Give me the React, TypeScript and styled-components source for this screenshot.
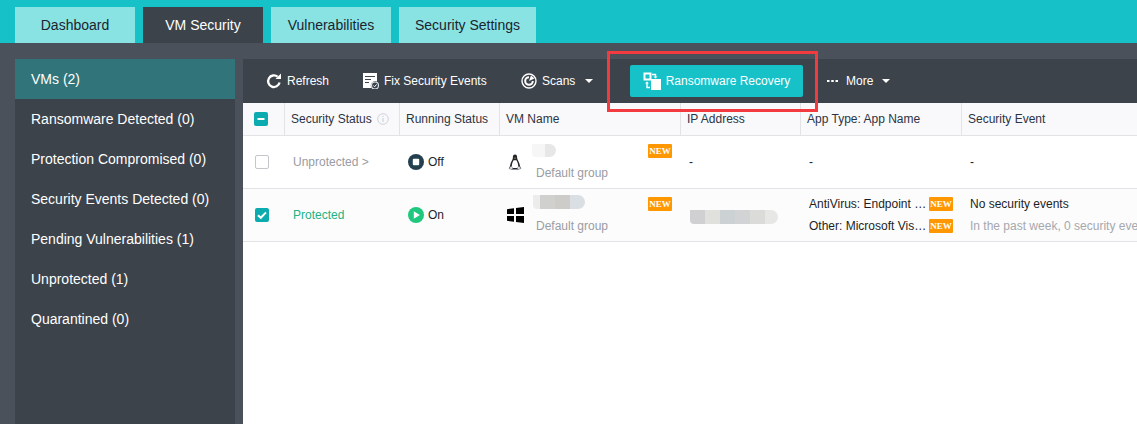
import React from "react";
import styled, { createGlobalStyle } from "styled-components";

const Global = createGlobalStyle`
  html, body { margin: 0; padding: 0; background: #4a515a; overflow: hidden; }
  body { font-family: "Liberation Sans", Arial, sans-serif; }
`;

const Page = styled.div`
  position: relative;
  width: 1137px;
  height: 424px;
  overflow: hidden;
  display: flex;
  flex-direction: column;
`;

const TabBar = styled.div`
  height: 36px;
  padding: 7px 0 0 15px;
  background: #17c1c8;
  display: flex;
  gap: 8px;
  flex: none;
`;

const Tab = styled.div<{ $active?: boolean; $w: number }>`
  width: ${(p) => p.$w}px;
  height: 36px;
  display: flex;
  align-items: center;
  justify-content: center;
  font-size: 14px;
  background: ${(p) => (p.$active ? "#3d434b" : "#8ae3e3")};
  color: ${(p) => (p.$active ? "#fff" : "#1a2530")};
`;

const Body = styled.div`
  flex: 1;
  min-height: 0;
  display: flex;
  gap: 8px;
  padding: 16px 0 0 15px;
`;

const Sidebar = styled.div`
  width: 220px;
  background: #3d434b;
  flex: none;
`;

const SideItem = styled.div<{ $active?: boolean }>`
  height: 40px;
  padding-left: 16px;
  display: flex;
  align-items: center;
  font-size: 14px;
  color: #fff;
  background: ${(p) => (p.$active ? "#31757b" : "transparent")};
`;

const Main = styled.div`
  flex: 1;
  min-width: 0;
  background: #fff;
  display: flex;
  flex-direction: column;
`;

const Toolbar = styled.div`
  height: 44px;
  flex: none;
  background: #3d434b;
  display: flex;
  align-items: center;
  color: #fff;
  font-size: 12px;
`;

const ToolItem = styled.div<{ $w: number }>`
  width: ${(p) => p.$w}px;
  flex: none;
  display: flex;
  align-items: center;
  gap: 5px;
  padding-left: 23px;
  box-sizing: border-box;
  white-space: nowrap;
`;

const MoreItem = styled(ToolItem)`
  padding-left: 24px;
  gap: 8px;
`;

const Caret = styled.span`
  width: 0;
  height: 0;
  margin-left: 5px;
  border-left: 4px solid transparent;
  border-right: 4px solid transparent;
  border-top: 4px solid #fff;
`;

const MoreCaret = styled(Caret)`
  margin-left: 1px;
`;

const RecoveryButton = styled.div`
  width: 173px;
  height: 32px;
  margin-left: 2px;
  background: #17c1c8;
  border-radius: 2px;
  display: flex;
  align-items: center;
  justify-content: center;
  gap: 5px;
  color: #fff;
  font-size: 12px;
  flex: none;
`;

const Row = styled.div<{ $kind: "head" | "off" | "on" }>`
  display: grid;
  grid-template-columns: 42px 115px 100px 181px 120px 161px 1fr;
  height: ${(p) => (p.$kind === "head" ? "33px" : "53px")};
  box-sizing: border-box;
  border-bottom: 1px solid #e1e3e6;
  background: ${(p) => (p.$kind === "head" ? "#f9f9fb" : p.$kind === "on" ? "#fcfcfc" : "#fff")};
  flex: none;
  overflow: hidden;
`;

const HeadCell = styled.div`
  display: flex;
  align-items: center;
  gap: 5px;
  padding-left: 6px;
  border-right: 1px solid #e1e3e6;
  font-size: 12px;
  color: #2c3344;
  white-space: nowrap;
  &:last-child { border-right: 0; }
`;

const CheckCell = styled.div`
  display: flex;
  align-items: center;
  justify-content: center;
  padding-right: 4px;
`;

const HeadCheckCell = styled(CheckCell)`
  border-right: 1px solid #e1e3e6;
  padding-right: 5px;
`;

const Box = styled.span<{ $on?: boolean }>`
  width: 14px;
  height: 14px;
  box-sizing: border-box;
  border-radius: 2px;
  border: ${(p) => (p.$on ? "0" : "1px solid #c4c6ca")};
  background: ${(p) => (p.$on ? "#0cabaf" : "#fff")};
  display: flex;
  align-items: center;
  justify-content: center;
`;

const Cell = styled.div<{ $tone?: "muted" | "green" }>`
  display: flex;
  align-items: center;
  padding-left: 8px;
  font-size: 12px;
  white-space: nowrap;
  overflow: hidden;
  color: ${(p) => (p.$tone === "muted" ? "#999ca3" : p.$tone === "green" ? "#24b283" : "#1c1f26")};
`;

const StatusCell = styled(Cell)`
  gap: 4px;
`;

const NameCell = styled.div`
  position: relative;
  display: flex;
  align-items: center;
  padding-left: 6px;
`;

const OsSlot = styled.span`
  width: 18px;
  flex: none;
  display: flex;
  justify-content: center;
`;

const NameStack = styled.div`
  display: flex;
  flex-direction: column;
  margin-left: 12px;
  height: 100%;
  justify-content: flex-end;
  padding-bottom: 8px;
  box-sizing: border-box;
`;

const GroupLabel = styled.span`
  font-size: 12px;
  color: #999ca3;
`;

const NewBadge = styled.span`
  width: 24px;
  height: 14px;
  flex: none;
  border-radius: 1px;
  background: #ff9800;
  color: #fff;
  font-family: "Liberation Serif", serif;
  font-weight: bold;
  font-size: 9px;
  line-height: 14px;
  text-align: center;
`;

const NameBadge = styled(NewBadge)`
  position: absolute;
  top: 8px;
  left: 148px;
`;

const Mosaic = styled.div<{ $left: number; $top: number }>`
  position: absolute;
  left: ${(p) => p.$left}px;
  top: ${(p) => p.$top}px;
  display: flex;
  overflow: hidden;
  border-radius: 0 7px 7px 4px;
`;

const Tile = styled.span<{ $c: string; $w: number; $h: number }>`
  width: ${(p) => p.$w}px;
  height: ${(p) => p.$h}px;
  background: ${(p) => p.$c};
`;

const IpCell = styled(Cell)`
  position: relative;
  overflow: visible;
`;

const AppCell = styled.div`
  display: flex;
  flex-direction: column;
  justify-content: center;
  gap: 8px;
  padding-left: 8px;
  font-size: 12px;
  color: #1c1f26;
`;

const AppLine = styled.div`
  display: flex;
  align-items: center;
  gap: 4px;
  height: 14px;
  white-space: nowrap;
`;

const AppText = styled.span`
  width: 116px;
`;

const EventCell = styled.div`
  display: flex;
  flex-direction: column;
  justify-content: center;
  gap: 8px;
  padding-left: 8px;
  font-size: 12px;
  color: #1c1f26;
  white-space: nowrap;
  overflow: hidden;
`;

const EventNote = styled.span`
  color: #a5a8ae;
`;

const Highlight = styled.div`
  position: absolute;
  left: 607px;
  top: 51px;
  width: 211px;
  height: 61px;
  box-sizing: border-box;
  border: 3px solid #f23a3f;
  pointer-events: none;
`;

const RefreshIcon = () => (
  <svg width="16" height="16" viewBox="0 0 16 16" fill="none">
    <path d="M13.600 9.500A5.800 5.800 0 1 1 11.600 3.700" stroke="#fff" strokeWidth="2.300" />
    <path d="M9.500 6h5.500V.5z" fill="#fff" />
  </svg>
);

const FixIcon = () => (
  <svg width="16" height="16" viewBox="0 0 16 16">
    <path d="M0 0h14v8.500a4.500 4.500 0 0 0-5.500 6.500H0z" fill="#fff" />
    <path d="M2 3.500h10M2 6.500h6M2 9.500h4" stroke="#3d434b" strokeWidth="1.200" />
    <circle cx="12" cy="12.500" r="3.500" fill="none" stroke="#dfe8ee" strokeWidth="1.100" />
    <path d="M10.300 12.500l1.300 1.300 2-2.400" fill="none" stroke="#fff" strokeWidth="1" />
  </svg>
);

const ScanIcon = () => (
  <svg width="16" height="16" viewBox="0 0 16 16" fill="none">
    <circle cx="8" cy="8" r="7" stroke="#fff" strokeWidth="1.400" />
    <path d="M8 4.200A3.800 3.800 0 1 0 11.800 8" stroke="#fff" strokeWidth="2" />
    <path d="M8 8l2-5.500 3.500 3z" fill="#fff" />
  </svg>
);

const RecoveryIcon = () => (
  <svg width="18" height="18" viewBox="0 0 18 18" fill="none">
    <rect x="1.500" y="1.500" width="6" height="6" stroke="#fff" strokeWidth="2" />
    <rect x="8" y="7" width="10" height="11" fill="#fff" />
    <path d="M9 2.500h3.500v3" stroke="#fff" strokeWidth="1.400" />
    <path d="M10.500 4.500l2 2 2-2z" fill="#fff" />
    <path d="M7 15.500H4v-5" stroke="#fff" strokeWidth="1.400" />
    <path d="M2 11.500l2-2 2 2z" fill="#fff" />
  </svg>
);

const MoreDots = () => (
  <svg width="11" height="2" viewBox="0 0 11 2">
    <path d="M0 0h2.500v2H0zM4.250 0h2.500v2h-2.500zM8.500 0H11v2H8.500z" fill="#fff" />
  </svg>
);

const InfoIcon = () => (
  <svg width="12" height="12" viewBox="0 0 12 12" fill="none">
    <circle cx="6" cy="6" r="5.300" stroke="#ced3dc" />
    <path d="M6 5v4M6 2.800v1.300" stroke="#ced3dc" strokeWidth="1.200" />
  </svg>
);

const Minus = () => (
  <svg width="14" height="14" viewBox="0 0 14 14">
    <path d="M3.500 7h7" stroke="#fff" strokeWidth="2" />
  </svg>
);

const Check = () => (
  <svg width="14" height="14" viewBox="0 0 14 14" fill="none">
    <path d="M3 7.200l2.800 2.600L11 4.400" stroke="#fff" strokeWidth="2" />
  </svg>
);

const OffIcon = () => (
  <svg width="16" height="16" viewBox="0 0 16 16">
    <circle cx="8" cy="8" r="8" fill="#24404f" />
    <rect x="4.800" y="4.800" width="6.400" height="6.400" rx="1" fill="#fff" />
  </svg>
);

const OnIcon = () => (
  <svg width="16" height="16" viewBox="0 0 16 16">
    <circle cx="8" cy="8" r="8" fill="#20c77f" />
    <path d="M5.800 4.200l6 3.800-6 3.800z" fill="#fff" />
  </svg>
);

const LinuxIcon = () => (
  <svg width="14" height="16" viewBox="0 0 14 16">
    <path d="M7 .5C5.200.5 4.800 2 4.900 3.800 5 5.500 2.500 8.500 2.200 11 2 12.500 1.300 13.500 1 14.500l3 1h6l3-1c-.3-1-1-2-1.200-3.500C11.500 8.500 9 5.500 9.100 3.800 9.200 2 8.800.5 7 .5z" fill="#22252b" />
    <path d="M5.600 6.200C4.200 8.500 3.400 11 4 14h6c.6-3-.2-5.500-1.600-7.800z" fill="#fff" />
    <path d="M5.900 3.800h2.200L7 5z" fill="#dba23a" />
    <path d="M1 14.500l3 1 .8-1.500-1.600-2zM13 14.500l-3 1-.8-1.500 1.600-2z" fill="#e2e5e8" stroke="#6a7078" strokeWidth=".5" />
  </svg>
);

const WinIcon = () => (
  <svg width="17" height="16" viewBox="0 0 17 16">
    <path d="M0 2.200l7-1V7H0zM9 .9L17 0v7H9zM0 9h7v5.800l-7-1zM9 9h8v7l-8-1z" fill="#000" />
  </svg>
);

const tiles = (list: [string, number][], h: number) =>
  list.map(([c, w], i) => <Tile key={i} $c={c} $w={w} $h={h} />);

export default function App() {
  return (
    <Page>
      <Global />
      <TabBar>
        <Tab $w={120}>Dashboard</Tab>
        <Tab $w={120} $active>VM Security</Tab>
        <Tab $w={120}>Vulnerabilities</Tab>
        <Tab $w={137}>Security Settings</Tab>
      </TabBar>
      <Body>
        <Sidebar>
          <SideItem $active>VMs (2)</SideItem>
          <SideItem>Ransomware Detected (0)</SideItem>
          <SideItem>Protection Compromised (0)</SideItem>
          <SideItem>Security Events Detected (0)</SideItem>
          <SideItem>Pending Vulnerabilities (1)</SideItem>
          <SideItem>Unprotected (1)</SideItem>
          <SideItem>Quarantined (0)</SideItem>
        </Sidebar>
        <Main>
          <Toolbar>
            <ToolItem $w={97}><RefreshIcon />Refresh</ToolItem>
            <ToolItem $w={158}><FixIcon />Fix Security Events</ToolItem>
            <ToolItem $w={130}><ScanIcon />Scans<Caret /></ToolItem>
            <RecoveryButton><RecoveryIcon />Ransomware Recovery</RecoveryButton>
            <MoreItem $w={90}><MoreDots /><span>More</span><MoreCaret /></MoreItem>
          </Toolbar>
          <Row $kind="head">
            <HeadCheckCell><Box $on><Minus /></Box></HeadCheckCell>
            <HeadCell>Security Status <InfoIcon /></HeadCell>
            <HeadCell>Running Status</HeadCell>
            <HeadCell>VM Name</HeadCell>
            <HeadCell>IP Address</HeadCell>
            <HeadCell>App Type: App Name</HeadCell>
            <HeadCell>Security Event</HeadCell>
          </Row>
          <Row $kind="off">
            <CheckCell><Box /></CheckCell>
            <Cell $tone="muted">Unprotected &gt;</Cell>
            <StatusCell><OffIcon />Off</StatusCell>
            <NameCell>
              <OsSlot><LinuxIcon /></OsSlot>
              <NameStack><GroupLabel>Default group</GroupLabel></NameStack>
              <Mosaic $left={32} $top={8}>{tiles([["#f5f6f5", 13], ["#e6e7e6", 11]], 13)}</Mosaic>
              <NameBadge>NEW</NameBadge>
            </NameCell>
            <Cell>-</Cell>
            <Cell>-</Cell>
            <Cell>-</Cell>
          </Row>
          <Row $kind="on">
            <CheckCell><Box $on><Check /></Box></CheckCell>
            <Cell $tone="green">Protected</Cell>
            <StatusCell><OnIcon />On</StatusCell>
            <NameCell>
              <OsSlot><WinIcon /></OsSlot>
              <NameStack><GroupLabel>Default group</GroupLabel></NameStack>
              <Mosaic $left={33} $top={6}>{tiles([["#ececec", 7], ["#d0d0cf", 15], ["#cdccc9", 15], ["#d9dfe2", 15]], 14)}</Mosaic>
              <NameBadge>NEW</NameBadge>
            </NameCell>
            <IpCell>
              <Mosaic $left={9} $top={21}>{tiles([["#d0cfd2", 15], ["#e0e1dd", 15], ["#ccd1d4", 15], ["#d2d3d4", 15], ["#dbdcd9", 15], ["#e7e7e6", 13]], 14)}</Mosaic>
            </IpCell>
            <AppCell>
              <AppLine><AppText>AntiVirus: Endpoint …</AppText><NewBadge>NEW</NewBadge></AppLine>
              <AppLine><AppText>Other: Microsoft Vis…</AppText><NewBadge>NEW</NewBadge></AppLine>
            </AppCell>
            <EventCell>
              <span>No security events</span>
              <EventNote>In the past week, 0 security events</EventNote>
            </EventCell>
          </Row>
        </Main>
      </Body>
      <Highlight />
    </Page>
  );
}
